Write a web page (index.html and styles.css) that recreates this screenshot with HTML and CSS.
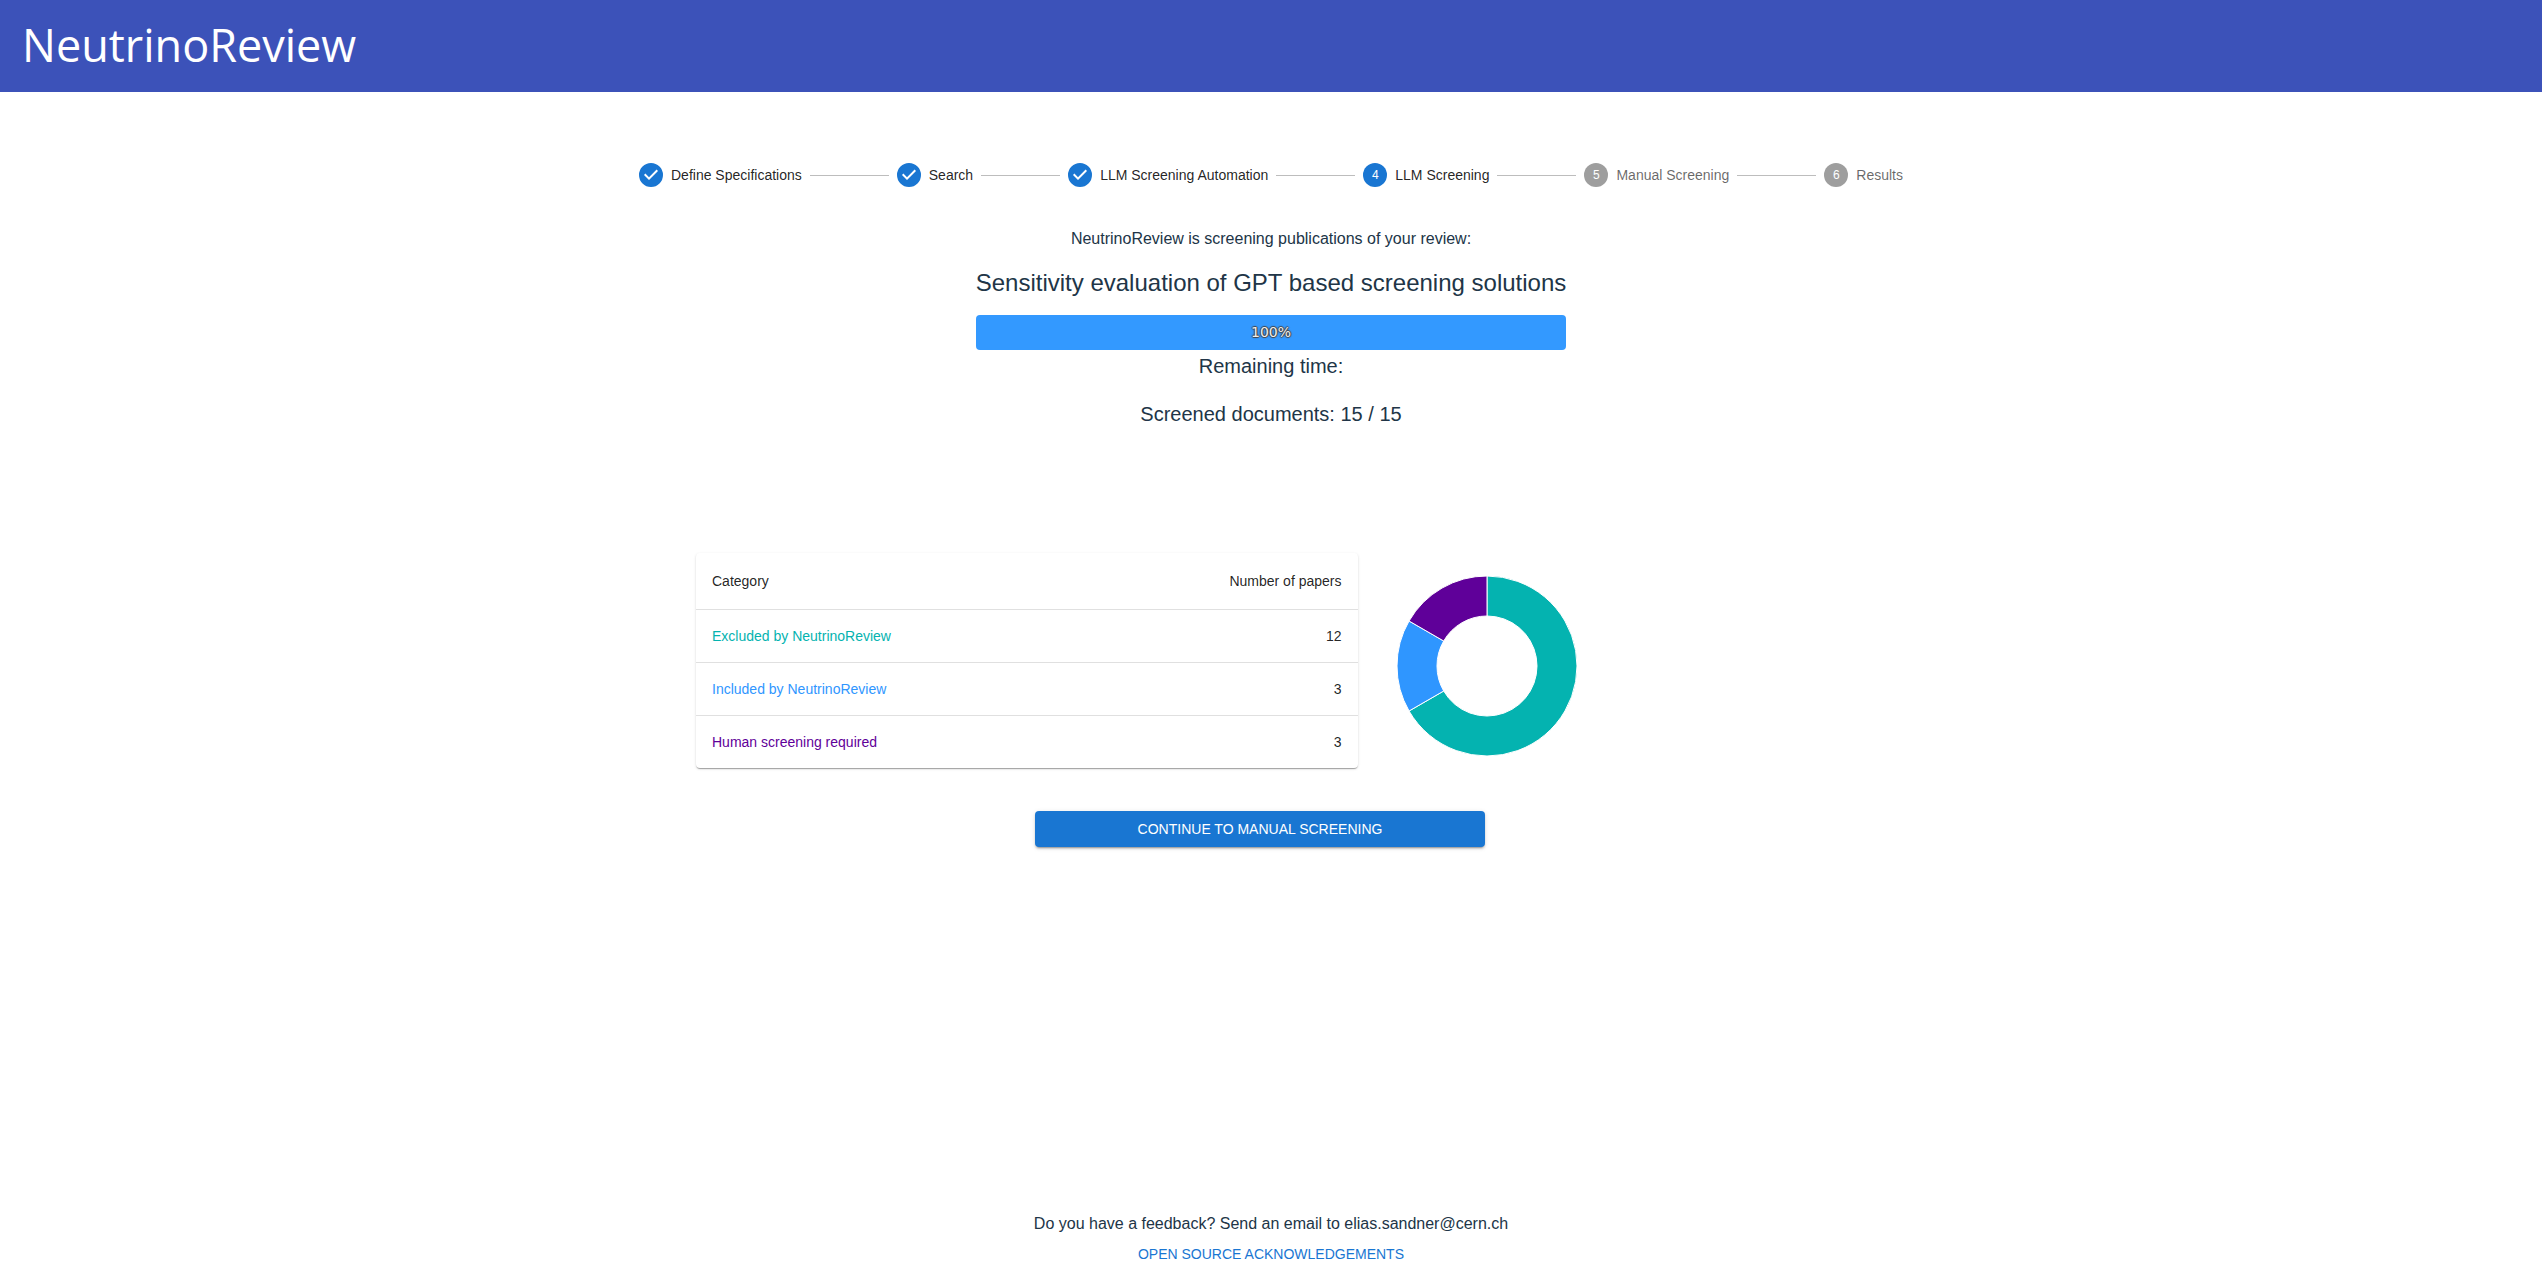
FILE: index.html
```html
<!DOCTYPE html>
<html lang="en">
<head>
  <meta charset="utf-8">
  <meta name="viewport" content="width=device-width, initial-scale=1">
  <title>NeutrinoReview</title>
  <link rel="stylesheet" href="styles.css">
</head>
<body>
  <header class="app-bar">
    <h1 class="app-title">NeutrinoReview</h1>
  </header>

  <main class="content">
    <ol class="stepper">
      <li class="step">
        <svg class="step-icon" viewBox="0 0 24 24" aria-hidden="true"><path d="M12 0a12 12 0 1 0 0 24 12 12 0 0 0 0-24zm-2 17l-5-5 1.400-1.400 3.600 3.600 7.600-7.600L19 8l-9 9z"/></svg>
        <span>Define Specifications</span>
      </li>
      <li class="step-line" aria-hidden="true"></li>
      <li class="step">
        <svg class="step-icon" viewBox="0 0 24 24" aria-hidden="true"><path d="M12 0a12 12 0 1 0 0 24 12 12 0 0 0 0-24zm-2 17l-5-5 1.400-1.400 3.600 3.600 7.600-7.600L19 8l-9 9z"/></svg>
        <span>Search</span>
      </li>
      <li class="step-line" aria-hidden="true"></li>
      <li class="step">
        <svg class="step-icon" viewBox="0 0 24 24" aria-hidden="true"><path d="M12 0a12 12 0 1 0 0 24 12 12 0 0 0 0-24zm-2 17l-5-5 1.400-1.400 3.600 3.600 7.600-7.600L19 8l-9 9z"/></svg>
        <span>LLM Screening Automation</span>
      </li>
      <li class="step-line" aria-hidden="true"></li>
      <li class="step" aria-current="step">
        <span class="step-number">4</span>
        <span>LLM Screening</span>
      </li>
      <li class="step-line" aria-hidden="true"></li>
      <li class="step step-pending">
        <span class="step-number">5</span>
        <span>Manual Screening</span>
      </li>
      <li class="step-line" aria-hidden="true"></li>
      <li class="step step-pending">
        <span class="step-number">6</span>
        <span>Results</span>
      </li>
    </ol>

    <section class="status">
      <p class="status-intro">NeutrinoReview is screening publications of your review:</p>
      <h2 class="review-title">Sensitivity evaluation of GPT based screening solutions</h2>
      <div class="progress" role="progressbar" aria-label="Screening progress" aria-valuemin="0" aria-valuemax="100" aria-valuenow="100">
        <div class="progress-fill" style="width: 100%">100%</div>
      </div>
      <p class="status-line">Remaining time:</p>
      <p class="status-line">Screened documents: 15 / 15</p>
    </section>

    <section class="summary">
      <div class="results">
        <table class="result-table">
          <thead>
            <tr><th scope="col">Category</th><th scope="col">Number of papers</th></tr>
          </thead>
          <tbody>
            <tr><td class="excluded">Excluded by NeutrinoReview</td><td>12</td></tr>
            <tr><td class="included">Included by NeutrinoReview</td><td>3</td></tr>
            <tr><td class="human">Human screening required</td><td>3</td></tr>
          </tbody>
        </table>
        <svg class="donut" viewBox="-90 -90 180 180" role="img" aria-label="Papers by category">
          <path class="slice-excluded" d="M0-90A90 90 0 1 1-77.942 45L-43.301 25A50 50 0 1 0 0-50Z"/>
          <path class="slice-included" d="M-77.942 45A90 90 0 0 1-77.942-45L-43.301-25A50 50 0 0 0-43.301 25Z"/>
          <path class="slice-human" d="M-77.942-45A90 90 0 0 1 0-90L0-50A50 50 0 0 0-43.301-25Z"/>
        </svg>
      </div>
      <button class="continue" type="button">CONTINUE TO MANUAL SCREENING</button>
    </section>
  </main>

  <footer class="footer">
    <p>Do you have a feedback? Send an email to elias.sandner@cern.ch</p>
    <a class="footer-link" href="#acknowledgements">OPEN SOURCE ACKNOWLEDGEMENTS</a>
  </footer>
</body>
</html>
```
FILE: styles.css
```css
* {
  box-sizing: border-box;
}

body {
  display: flex;
  flex-direction: column;
  min-height: 100vh;
  margin: 0;
  background: #fff;
  color: #213547;
  font: 16px/24px "Liberation Sans", Arial, sans-serif;
}

h1, h2, p {
  margin: 0;
  font-weight: 400;
}

.app-bar {
  padding: 13px 22px 15px;
  background: #3c52b9;
  color: #fff;
}

.app-title {
  font: 400 45px/64px "Open Sans", "Noto Sans", sans-serif;
}

.content {
  flex: 1;
  width: 100%;
  max-width: 1280px;
  margin: 0 auto;
  padding-top: 71px;
}

.stepper {
  display: flex;
  align-items: center;
  margin: 0;
  padding: 0;
  list-style: none;
}

.step {
  display: flex;
  align-items: center;
  gap: 8px;
  padding: 0 8px;
  color: rgba(0, 0, 0, 0.87);
  font-size: 14px;
  line-height: 20px;
}

.step-icon {
  width: 24px;
  height: 24px;
  fill: #1976d2;
}

.step-number {
  width: 24px;
  border-radius: 50%;
  background: #1976d2;
  color: #fff;
  font-size: 12px;
  line-height: 24px;
  text-align: center;
}

.step-pending {
  color: rgba(0, 0, 0, 0.6);
}

.step-pending .step-number {
  background: #9e9e9e;
}

.step-line {
  flex: 1;
  border-top: 1px solid #bdbdbd;
}

.status {
  display: flex;
  flex-direction: column;
  align-items: center;
  width: fit-content;
  margin: 40px auto 0;
}

.review-title {
  margin: 16px 0;
  font-size: 24px;
  line-height: 32px;
}

.progress {
  width: 100%;
  overflow: hidden;
  border-radius: 4px;
  background: #e0e0e0;
}

.progress-fill {
  background: #3399ff;
  color: #eee;
  font: 14px/35px "DejaVu Sans", Verdana, sans-serif;
  text-align: center;
  text-shadow: 1px 0 1px #444, -1px 0 1px #444, 0 1px 1px #444, 0 -1px 1px #444;
}

.status-line {
  font-size: 20px;
  line-height: 32px;
}

.status-line + .status-line {
  margin-top: 16px;
}

.summary {
  width: 882px;
  max-width: 100%;
  margin: 123px 0 0 65px;
}

.results {
  display: flex;
  align-items: flex-start;
  gap: 39px;
}

.result-table {
  width: 75%;
  border-radius: 4px;
  border-spacing: 0;
  background: #fff;
  box-shadow: 0 2px 1px -1px rgba(0, 0, 0, 0.2), 0 1px 1px rgba(0, 0, 0, 0.14), 0 1px 3px rgba(0, 0, 0, 0.12);
  color: rgba(0, 0, 0, 0.87);
  font-size: 14px;
}

.result-table th,
.result-table td {
  padding: 16px;
  border-bottom: 1px solid #e0e0e0;
  font-weight: 400;
  line-height: 20px;
  text-align: left;
}

.result-table th {
  line-height: 24px;
}

.result-table tr > :last-child {
  text-align: right;
}

.result-table tbody tr:last-child td {
  border-bottom: 0;
}

.result-table .excluded {
  color: #04b3b0;
}

.result-table .included {
  color: #2f96ff;
}

.result-table .human {
  color: #5f0099;
}

.donut {
  flex: none;
  width: 180px;
  height: 180px;
  margin-top: 23px;
  overflow: visible;
  stroke: #fff;
}

.slice-excluded {
  fill: #04b3b0;
}

.slice-included {
  fill: #2f96ff;
}

.slice-human {
  fill: #5f0099;
}

.continue {
  display: block;
  width: 450px;
  margin: 43px 0 0 339px;
  padding: 6px 16px;
  border: 0;
  border-radius: 4px;
  background: #1976d2;
  box-shadow: 0 3px 1px -2px rgba(0, 0, 0, 0.2), 0 2px 2px rgba(0, 0, 0, 0.14), 0 1px 5px rgba(0, 0, 0, 0.12);
  color: #fff;
  font: 14px/24px "Liberation Sans", Arial, sans-serif;
}

.footer {
  display: flex;
  flex-direction: column;
  align-items: center;
}

.footer-link {
  padding: 6px 8px 1px;
  color: #1976d2;
  font-size: 14px;
  line-height: 24px;
  text-decoration: none;
}
```
